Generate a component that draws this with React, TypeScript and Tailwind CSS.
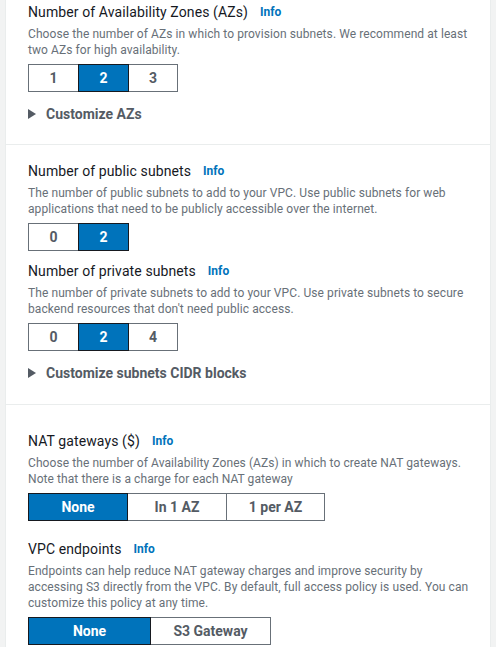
import React from 'react';

const font = { fontFamily: 'Roboto, "Noto Sans", Arial, sans-serif' };

function Seg({ options, selected, widths }: { options: string[]; selected: number; widths: number[] }) {
  return (
    <div className="mt-[6px] flex h-[28px]">
      {options.map((o, i) => (
        <div
          key={o}
          style={{ width: widths[i] }}
          className={
            'flex items-center justify-center text-[14px] font-bold border ' +
            (i > 0 ? '-ml-px ' : '') +
            (i === selected
              ? 'bg-[#0073bb] text-white border-[#16191f] z-10'
              : 'bg-white text-[#545b64] border-[#687078]')
          }
        >
          {o}
        </div>
      ))}
    </div>
  );
}

function Field({ title, desc, children }: { title: string; desc: React.ReactNode; children: React.ReactNode }) {
  return (
    <div>
      <div className="flex items-center gap-[12px] leading-[20px]">
        <span className="text-[14px] tracking-[0.1px] text-[#16191f]">{title}</span>
        <span className="text-[12px] font-bold text-[#0073bb]">Info</span>
      </div>
      <p className="mt-[4px] whitespace-nowrap text-[12px] leading-[16px] tracking-[0.08px] text-[#687078]">{desc}</p>
      {children}
    </div>
  );
}

function Expander({ label }: { label: string }) {
  return (
    <div className="mt-[12px] flex items-center gap-[10px] leading-[20px] text-[14px] font-bold text-[#545b64]">
      <svg width="8" height="10" viewBox="0 0 8 10">
        <path d="M0 0 L8 5 L0 10 Z" fill="#545b64" />
      </svg>
      {label}
    </div>
  );
}

export default function App() {
  return (
    <div style={font} className="h-[647px] overflow-hidden bg-[#f2f3f3] px-[5px]">
      <div className="h-full border-x border-[#eaeded] bg-white">
        <section className="px-[22px] pt-[2px] pb-[20px]">
          <Field
            title="Number of Availability Zones (AZs)"
            desc={<>Choose the number of AZs in which to provision subnets. We recommend at least<br />two AZs for high availability.</>}
          >
            <Seg options={['1', '2', '3']} selected={1} widths={[51, 51, 50]} />
          </Field>
          <Expander label="Customize AZs" />
        </section>

        <section className="border-t border-[#eaeded] px-[22px] pt-[16px] pb-[21px]">
          <Field
            title="Number of public subnets"
            desc={<>The number of public subnets to add to your VPC. Use public subnets for web<br />applications that need to be publicly accessible over the internet.</>}
          >
            <Seg options={['0', '2']} selected={1} widths={[51, 51]} />
          </Field>
          <div className="mt-[10px]">
            <Field
              title="Number of private subnets"
              desc={<>The number of private subnets to add to your VPC. Use private subnets to secure<br />backend resources that don't need public access.</>}
            >
              <Seg options={['0', '2', '4']} selected={1} widths={[51, 51, 50]} />
            </Field>
          </div>
          <Expander label="Customize subnets CIDR blocks" />
        </section>

        <section className="border-t border-[#eaeded] px-[22px] pt-[26px]">
          <Field
            title="NAT gateways ($)"
            desc={<>Choose the number of Availability Zones (AZs) in which to create NAT gateways.<br />Note that there is a charge for each NAT gateway</>}
          >
            <Seg options={['None', 'In 1 AZ', '1 per AZ']} selected={0} widths={[100, 100, 99]} />
          </Field>
          <div className="mt-[18px]">
            <Field
              title="VPC endpoints"
              desc={<>Endpoints can help reduce NAT gateway charges and improve security by<br />accessing S3 directly from the VPC. By default, full access policy is used. You can<br />customize this policy at any time.</>}
            >
              <Seg options={['None', 'S3 Gateway']} selected={0} widths={[123, 121]} />
            </Field>
          </div>
        </section>
      </div>
    </div>
  );
}
